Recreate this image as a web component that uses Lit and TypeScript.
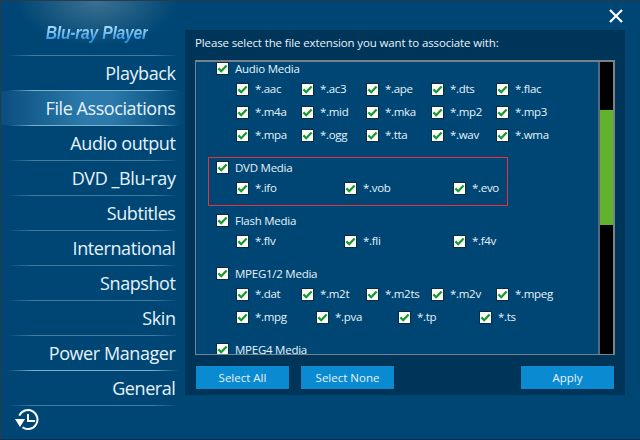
import { LitElement, html, css, svg } from "lit";
import { customElement } from "lit/decorators.js";

const check = html`<span class="cb"><svg width="11" height="11" viewBox="0 0 11 11"><path d="M1.4 5.4 L4.2 8.2 L9.6 2.4" fill="none" stroke="#14982c" stroke-width="2.2"/></svg></span>`;

interface Group { name: string; boxed?: boolean; rows: { cols: number[]; items: string[] }[]; }
const c5 = [65, 65, 65, 65, 65];
const c3 = [108, 109, 60];
const groups: Group[] = [
  { name: "Audio Media", rows: [
    { cols: c5, items: ["*.aac", "*.ac3", "*.ape", "*.dts", "*.flac"] },
    { cols: c5, items: ["*.m4a", "*.mid", "*.mka", "*.mp2", "*.mp3"] },
    { cols: c5, items: ["*.mpa", "*.ogg", "*.tta", "*.wav", "*.wma"] },
  ] },
  { name: "DVD Media", boxed: true, rows: [{ cols: c3, items: ["*.ifo", "*.vob", "*.evo"] }] },
  { name: "Flash Media", rows: [{ cols: c3, items: ["*.flv", "*.fli", "*.f4v"] }] },
  { name: "MPEG1/2 Media", rows: [
    { cols: c5, items: ["*.dat", "*.m2t", "*.m2ts", "*.m2v", "*.mpeg"] },
    { cols: [80, 82, 81, 60], items: ["*.mpg", "*.pva", "*.tp", "*.ts"] },
  ] },
  { name: "MPEG4 Media", rows: [] },
];
const nav = ["Playback", "File Associations", "Audio output", "DVD _Blu-ray", "Subtitles", "International", "Snapshot", "Skin", "Power Manager", "General"];

@customElement("app-root")
export class AppRoot extends LitElement {
  static styles = css`
    :host { display: block; width: 640px; height: 440px; overflow: hidden; font-family: "Open Sans", "Noto Sans", sans-serif; color: #e6f3fb; }
    .win { position: relative; box-sizing: border-box; width: 640px; height: 440px; display: flex; background: #004674; border-top: 1px solid #2b3a48; border-left: 1px solid #2b3a48; border-bottom: 1px solid #12304a; overflow: hidden; }
    .side { width: 184px; flex: none; display: flex; flex-direction: column; background: radial-gradient(ellipse 80px 45px at 96px 0, #3c7193 0%, rgba(60,113,147,0) 100%); }
    .logo { height: 54px; flex: none; display: flex; align-items: center; justify-content: center; padding: 10px 0 0 8px; box-sizing: border-box; }
    .logo span { display: inline-block; transform: scaleX(.9); font: italic bold 17.5px "Liberation Sans", sans-serif; letter-spacing: -0.3px; background: linear-gradient(#9fd8fa 25%, #2b8fe6 85%); -webkit-background-clip: text; background-clip: text; color: transparent; }
    .sep { height: 1px; flex: none; margin: 0 6px; background: linear-gradient(90deg, rgba(110,160,190,0), rgba(110,160,190,.6) 15%, rgba(110,160,190,.6) 85%, rgba(110,160,190,0)); }
    .sep.hi { background: linear-gradient(90deg, rgba(150,195,220,0), rgba(150,195,220,.85) 15%, rgba(150,195,220,.85) 85%, rgba(150,195,220,0)); }
    .item { height: 34px; flex: none; display: flex; align-items: center; justify-content: flex-end; padding-right: 9.5px; font-size: 18px; letter-spacing: -0.42px; white-space: nowrap; }
    .item.sel { background: linear-gradient(90deg, #0a4e7e 0%, #2b7aab 45%, #2b7aab 60%, #004674 100%); }
    .foot { flex: none; padding: 1px 0 0 14px; }
    .main { flex: 1; padding-top: 29px; }
    .panel { box-sizing: border-box; width: 440px; height: 365px; background: #00355a; padding: 30px 10px 5px 10px; position: relative; }
    .title { position: absolute; left: 10px; top: 5px; font-size: 11.5px; letter-spacing: -0.13px; white-space: nowrap; }
    .list { box-sizing: border-box; width: 420px; height: 295px; display: flex; background: #004674; border: 2px solid #75838f; border-left-width: 1px; border-bottom-width: 1px; }
    .scroll { flex: 1; height: 100%; overflow: hidden; box-sizing: border-box; padding: 0 0 0 20px; }
    .inner { margin-top: -4px; }
    .bar { width: 15px; flex: none; box-sizing: border-box; border-left: 2px solid #526a7c; background: #000; padding-top: 48px; }
    .thumb { height: 115px; background: #62b22b; }
    .grp { box-sizing: border-box; margin-bottom: 10px; }
    .grp.boxed { width: 300px; height: 49px; margin: 10px 0 4px -8px; padding-left: 7px; border: 1px solid #e5333c; }
    .boxed .head { margin-top: -1px; }
    .head, .row { display: flex; align-items: center; line-height: 12px; }
    .head { height: 20px; font-size: 11.5px; letter-spacing: -0.25px; white-space: nowrap; }
    .head .t { padding-top: 1px; }
    .row { height: 23px; padding-left: 20px; font-size: 11.5px; letter-spacing: -0.3px; width: 380px; }
    .row .t { margin-top: -2px; }
    .opt { display: flex; align-items: center; white-space: nowrap; flex: none; }
    .cb { box-sizing: border-box; width: 13px; height: 13px; margin-right: 6px; background: #fff; border: 1px solid #0d2a44; display: inline-flex; align-items: center; justify-content: center; flex: none; }
    .btns { display: flex; margin-top: 10px; gap: 10px; }
    .btn { box-sizing: border-box; width: 95px; height: 25px; background: #0a8ad0; border: 1px solid #052d4d; display: flex; align-items: center; justify-content: center; font-size: 11.5px; flex: none; }
    .btn.apply { margin-left: auto; }
    .close { position: absolute; right: 17px; top: 8px; width: 14px; height: 14px; }
  `;
  render() {
    return html`<div class="win">
      <div class="side">
        <div class="logo"><span>Blu-ray Player</span></div>
        <div class="sep"></div>
        ${nav.map((n, i) => html`<div class="item ${i === 1 ? "sel" : ""}">${n}</div><div class="sep ${i < 2 || i === 8 ? "hi" : ""}"></div>`)}
        <div class="foot">
          <svg width="24" height="24" viewBox="0 0 24 24" fill="none" stroke="#fff" stroke-width="2">
            ${svg`<path d="M4.3 8.6 A9.5 9.5 0 1 1 7.5 20.3"/><path d="M13 7 V14 H20"/><path d="M0 12 H10 L5 20 Z" fill="#fff" stroke="none"/>`}
          </svg>
        </div>
      </div>
      <div class="main">
        <div class="panel">
          <div class="title">Please select the file extension you want to associate with:</div>
          <div class="list">
            <div class="scroll"><div class="inner">
              ${groups.map((g) => html`<div class="grp ${g.boxed ? "boxed" : ""}">
                <div class="head">${check}<span class="t">${g.name}</span></div>
                ${g.rows.map((r) => html`<div class="row">${r.items.map((t, j) => html`<div class="opt" style="width:${r.cols[j]}px">${check}<span class="t">${t}</span></div>`)}</div>`)}
              </div>`)}
            </div></div>
            <div class="bar"><div class="thumb"></div></div>
          </div>
          <div class="btns">
            <div class="btn">Select All</div>
            <div class="btn">Select None</div>
            <div class="btn apply">Apply</div>
          </div>
        </div>
      </div>
      <svg class="close" viewBox="0 0 14 14" stroke="#fff" stroke-width="2.2"><path d="M1 1 L13 13 M13 1 L1 13"/></svg>
    </div>`;
  }
}
